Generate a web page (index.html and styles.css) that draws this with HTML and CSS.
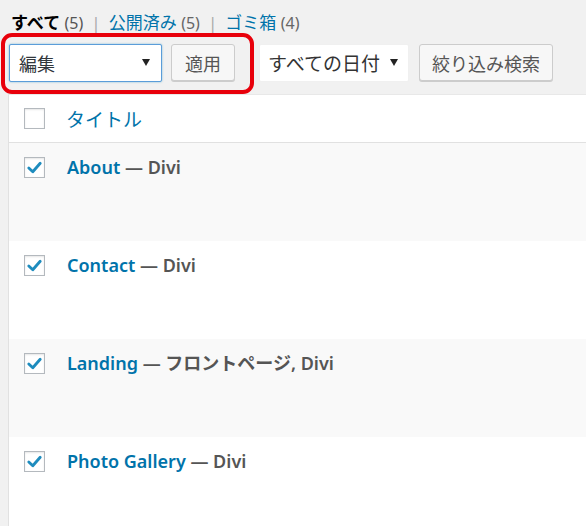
FILE: index.html
```html
<!DOCTYPE html>
<html lang="ja">
<head>
<meta charset="utf-8">
<link rel="stylesheet" href="styles.css">
</head>
<body>
<div class="wrap">
  <ul class="subsubsub">
    <li class="current">すべて <span class="count">(5)</span></li>
    <li class="sep">|</li>
    <li><a>公開済み</a> <span class="count">(5)</span></li>
    <li class="sep">|</li>
    <li><a>ゴミ箱</a> <span class="count">(4)</span></li>
  </ul>
  <div class="tablenav">
    <div class="select select-focus"><span>編集</span><span class="arrow"></span></div>
    <div class="button btn-apply">適用</div>
    <div class="select select-date"><span>すべての日付</span><span class="arrow"></span></div>
    <div class="button btn-filter">絞り込み検索</div>
    <div class="highlight"></div>
  </div>
  <div class="table">
    <div class="thead">
      <span class="cb"></span>
      <a class="col-title">タイトル</a>
    </div>
    <div class="row alt">
      <span class="cb checked"><svg viewBox="0 0 20 20"><path d="M4 10.5 L8.2 14.5 L16 5.5" /></svg></span>
      <div class="title"><a>About</a> — Divi</div>
    </div>
    <div class="row">
      <span class="cb checked"><svg viewBox="0 0 20 20"><path d="M4 10.5 L8.2 14.5 L16 5.5" /></svg></span>
      <div class="title"><a>Contact</a> — Divi</div>
    </div>
    <div class="row alt">
      <span class="cb checked"><svg viewBox="0 0 20 20"><path d="M4 10.5 L8.2 14.5 L16 5.5" /></svg></span>
      <div class="title"><a>Landing</a> — フロントページ, Divi</div>
    </div>
    <div class="row">
      <span class="cb checked"><svg viewBox="0 0 20 20"><path d="M4 10.5 L8.2 14.5 L16 5.5" /></svg></span>
      <div class="title"><a>Photo Gallery</a> — Divi</div>
    </div>
  </div>
</div>
</body>
</html>
```

FILE: styles.css
```css
html, body {
  margin: 0;
  padding: 0;
  background: #f1f1f1;
  overflow: hidden;
}
body {
  width: 586px;
  height: 526px;
  font-family: "Noto Sans", "Noto Sans CJK JP", sans-serif;
  color: #444;
}
.wrap {
  position: relative;
}
.subsubsub {
  list-style: none;
  margin: 0;
  padding: 11px 0 0 11px;
  display: flex;
  gap: 8px;
  font-size: 17px;
  line-height: 24px;
  height: 24px;
  color: #555;
}
.subsubsub li { white-space: nowrap; }
.subsubsub .current { color: #000; font-weight: 700; }
.subsubsub .current .count { font-weight: 400; color: #555; }
.subsubsub a { color: #0073aa; }
.subsubsub .count { color: #666; font-size: 16px; }
.subsubsub .sep { color: #aaa; }

.tablenav {
  position: relative;
  display: flex;
  align-items: center;
  margin-top: 8px;
  padding-left: 9px;
  height: 39px;
}
.select {
  box-sizing: border-box;
  height: 38px;
  display: flex;
  align-items: center;
  justify-content: space-between;
  background: #fff;
  font-family: "Noto Sans CJK JP", sans-serif;
  font-size: 18px;
  color: #32373c;
  border-radius: 2px;
}
.select-focus {
  width: 153px;
  border: 1px solid #5b9dd9;
  box-shadow: 0 0 2px rgba(30,140,190,.6);
  padding: 0 9px 0 9px;
}
.select-date {
  width: 150px;
  margin-left: 24px;
  border: 1px solid #f0f0f0;
  padding: 0 8px 0 8px;
  color: #333;
  font-size: 19px;
}
.arrow {
  width: 0;
  height: 0;
  border-left: 4px solid transparent;
  border-right: 4px solid transparent;
  border-top: 7px solid #222;
  margin-right: 2px;
}
.button {
  box-sizing: border-box;
  height: 37px;
  display: flex;
  align-items: center;
  justify-content: center;
  background: #f7f7f7;
  border: 1px solid #ccc;
  border-radius: 3px;
  box-shadow: 0 1px 0 #ccc;
  font-family: "Noto Sans CJK JP", sans-serif;
  font-size: 18px;
  color: #555;
}
.btn-apply { width: 64px; margin-left: 9px; }
.btn-filter { width: 134px; margin-left: 10px; }
.highlight {
  position: absolute;
  left: 1px;
  top: -10px;
  width: 253px;
  height: 61px;
  box-sizing: border-box;
  border: 4px solid #e8000b;
  border-radius: 11px;
  pointer-events: none;
}

.table {
  margin: 12px 0 0 8px;
  border-left: 1px solid #e1e1e1;
  border-top: 1px solid #e8e8e8;
  background: #fff;
}
.thead {
  height: 47px;
  display: flex;
  align-items: center;
  padding-left: 15px;
  border-bottom: 1px solid #e1e1e1;
}
.cb {
  box-sizing: border-box;
  width: 21px;
  height: 21px;
  flex: none;
  border: 1px solid #b4b9be;
  background: #fff;
  box-shadow: inset 0 1px 2px rgba(0,0,0,.1);
  display: flex;
  align-items: center;
  justify-content: center;
}
.cb svg { width: 19px; height: 19px; }
.cb svg path {
  fill: none;
  stroke: #1e8cbe;
  stroke-width: 3;
  stroke-linecap: round;
  stroke-linejoin: round;
}
.col-title {
  margin-left: 21px;
  color: #0073aa;
  font-family: "Noto Sans CJK JP", sans-serif;
  font-size: 19px;
}
.row {
  height: 98px;
  box-sizing: border-box;
  display: flex;
  align-items: flex-start;
  padding: 14px 0 0 15px;
  background: #fff;
}
.row.alt { background: #f9f9f9; }
.title {
  margin-left: 22px;
  margin-top: -4px;
  line-height: 28px;
  font-size: 18px;
  font-weight: 600;
  color: #555;
  white-space: nowrap;
}
.title a { color: #0073aa; }
```
